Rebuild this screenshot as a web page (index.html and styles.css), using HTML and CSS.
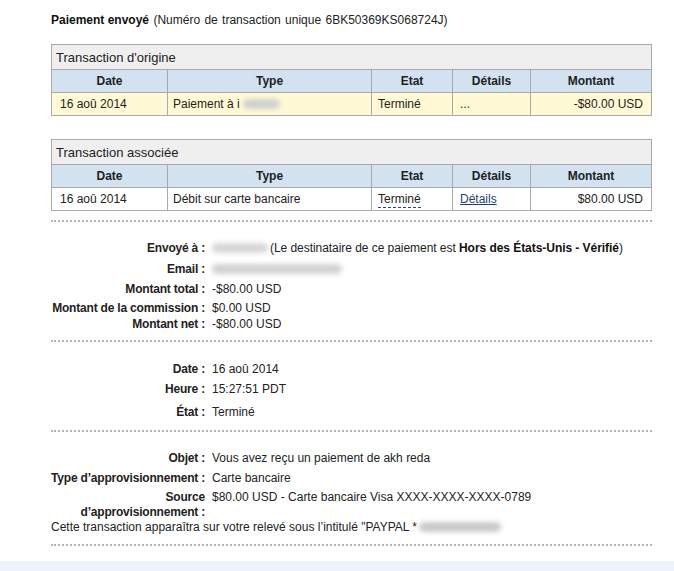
FILE: index.html
```html
<!DOCTYPE html>
<html lang="fr">
<head>
<meta charset="utf-8">
<title>Paiement envoyé</title>
<link rel="stylesheet" href="styles.css">
</head>
<body>
<div class="page">
  <p class="title"><b>Paiement envoyé</b> (Numéro de transaction unique 6BK50369KS068724J)</p>

  <table class="tx">
    <colgroup><col class="c-date"><col class="c-type"><col class="c-etat"><col class="c-det"><col class="c-mnt"></colgroup>
    <tr class="cap"><td colspan="5">Transaction d'origine</td></tr>
    <tr class="head"><th>Date</th><th>Type</th><th>Etat</th><th>Détails</th><th>Montant</th></tr>
    <tr class="row hl"><td class="d">16 aoû 2014</td><td class="t">Paiement à i<span class="blur b-type"></span></td><td class="e">Terminé</td><td class="dt">...</td><td class="m">-$80.00 USD</td></tr>
  </table>

  <table class="tx tx2">
    <colgroup><col class="c-date"><col class="c-type"><col class="c-etat"><col class="c-det"><col class="c-mnt"></colgroup>
    <tr class="cap"><td colspan="5">Transaction associée</td></tr>
    <tr class="head"><th>Date</th><th>Type</th><th>Etat</th><th>Détails</th><th>Montant</th></tr>
    <tr class="row"><td class="d visited">16 aoû 2014</td><td class="t">Débit sur carte bancaire</td><td class="e"><span class="dashed">Terminé</span></td><td class="dt"><a href="#" class="link">Détails</a></td><td class="m">$80.00 USD</td></tr>
  </table>

  <div class="sep"></div>

  <div class="info s1">
    <div class="r"><span class="l">Envoyé à&nbsp;:</span><span class="v"><span class="blur b-name"></span>(Le destinataire de ce paiement est <b>Hors des États-Unis - Vérifié</b>)</span></div>
    <div class="r g5"><span class="l">Email&nbsp;:</span><span class="v"><span class="blur b-mail"></span></span></div>
    <div class="r g4"><span class="l">Montant total&nbsp;:</span><span class="v">-$80.00 USD</span></div>
    <div class="r g3"><span class="l">Montant de la commission&nbsp;:</span><span class="v">$0.00 USD</span></div>
    <div class="r"><span class="l">Montant net&nbsp;:</span><span class="v">-$80.00 USD</span></div>
  </div>

  <div class="sep"></div>

  <div class="info s2">
    <div class="r"><span class="l">Date&nbsp;:</span><span class="v">16 aoû 2014</span></div>
    <div class="r g4"><span class="l">Heure&nbsp;:</span><span class="v">15:27:51 PDT</span></div>
    <div class="r g7"><span class="l">État&nbsp;:</span><span class="v">Terminé</span></div>
  </div>

  <div class="sep"></div>

  <div class="info s3">
    <div class="r"><span class="l">Objet&nbsp;:</span><span class="v">Vous avez reçu un paiement de akh reda</span></div>
    <div class="r g4"><span class="l">Type d’approvisionnement&nbsp;:</span><span class="v">Carte bancaire</span></div>
    <div class="r g4 tight"><span class="l wrap">Source d’approvisionnement&nbsp;:</span><span class="v">$80.00 USD - Carte bancaire Visa XXXX-XXXX-XXXX-0789</span></div>
    <p class="note">Cette transaction apparaîtra sur votre relevé sous l’intitulé "PAYPAL *<span class="blur b-pp"></span></p>
  </div>

  <div class="sep"></div>
</div>
<div class="band"></div>
</body>
</html>
```

FILE: styles.css
```css
html, body {
  margin: 0;
  padding: 0;
  background: #fff;
}

body {
  font-family: "Liberation Sans", Arial, sans-serif;
  font-size: 12px;
  color: #222;
}

.page {
  width: 601px;
  padding: 0 22px 0 51px;
}

.title {
  margin: 0;
  padding-top: 12px;
  line-height: 16px;
  color: #222;
  word-spacing: 1px;
}

.title b {
  color: #111;
  word-spacing: 0;
}

.tx {
  margin-top: 16px;
  width: 601px;
  border-collapse: collapse;
  table-layout: fixed;
  border: 1px solid #a9a9a9;
}

.tx2 {
  margin-top: 23px;
}

.c-date { width: 116px; }
.c-type { width: 204px; }
.c-etat { width: 81px; }
.c-det  { width: 78px; }
.c-mnt  { width: 121px; }

.tx td, .tx th {
  border: 1px solid #a9a9a9;
  padding: 0;
  white-space: nowrap;
}

.cap td {
  background: #efefef;
  height: 24px;
  font-size: 13px;
  padding-left: 4px;
  color: #222;
}

.head th {
  background: #d2e2f1;
  height: 22px;
  font-weight: bold;
  text-align: center;
  color: #222;
}

.row td {
  height: 22px;
  background: #fff;
  color: #222;
}

.row.hl td {
  background: #fffad5;
}

.row .d { padding-left: 8px; }
.row .t { padding-left: 5px; }
.row .e { padding-left: 6px; }
.row .dt { padding-left: 7px; }
.row .m { text-align: right; padding-right: 8px; }

.visited { color: #3a1d4a; }

.dashed {
  border-bottom: 1px dashed #23468a;
  padding-bottom: 1px;
}

.link {
  color: #1c3d7a;
  text-decoration: underline;
}

.blur {
  display: inline-block;
  height: 10px;
  vertical-align: -1px;
  background: #cfcfcf;
  border-radius: 5px;
  filter: blur(2.5px);
}

.b-type { width: 37px; margin-left: 3px; }
.b-name { width: 56px; margin-right: 2px; background: #d6d6d6; }
.b-mail { width: 130px; background: #d2d2d2; }
.b-pp { width: 82px; margin-left: 2px; background: #c9c9c9; }

.sep {
  border-top: 2px dotted #b4b4b4;
  width: 601px;
}

.tx2 + .sep {
  margin-top: 9px;
}

.info .r {
  display: grid;
  grid-template-columns: 154px 1fr;
  column-gap: 7px;
  line-height: 16px;
}

.info .l {
  text-align: right;
  font-weight: bold;
  color: #222;
  letter-spacing: -0.2px;
  white-space: nowrap;
}

.info .l.wrap {
  white-space: normal;
}

.info .v {
  color: #222;
  white-space: nowrap;
}

.info .v b { color: #111; }

.s1 .r:first-child .v {
  letter-spacing: -0.05px;
}

.g3 { margin-top: 3px; }
.g4 { margin-top: 4px; }
.g5 { margin-top: 5px; }
.g7 { margin-top: 7px; }

.s1 { padding: 18px 0 8px; }
.s2 { padding: 19px 0 10px; }
.s3 { padding: 18px 0 9px; }

.info .tight {
  line-height: 15px;
}

.note {
  margin: 0;
  line-height: 15px;
  color: #222;
  white-space: nowrap;
}

.band {
  margin-top: 15px;
  height: 10px;
  background: #eef3fa;
}
```
